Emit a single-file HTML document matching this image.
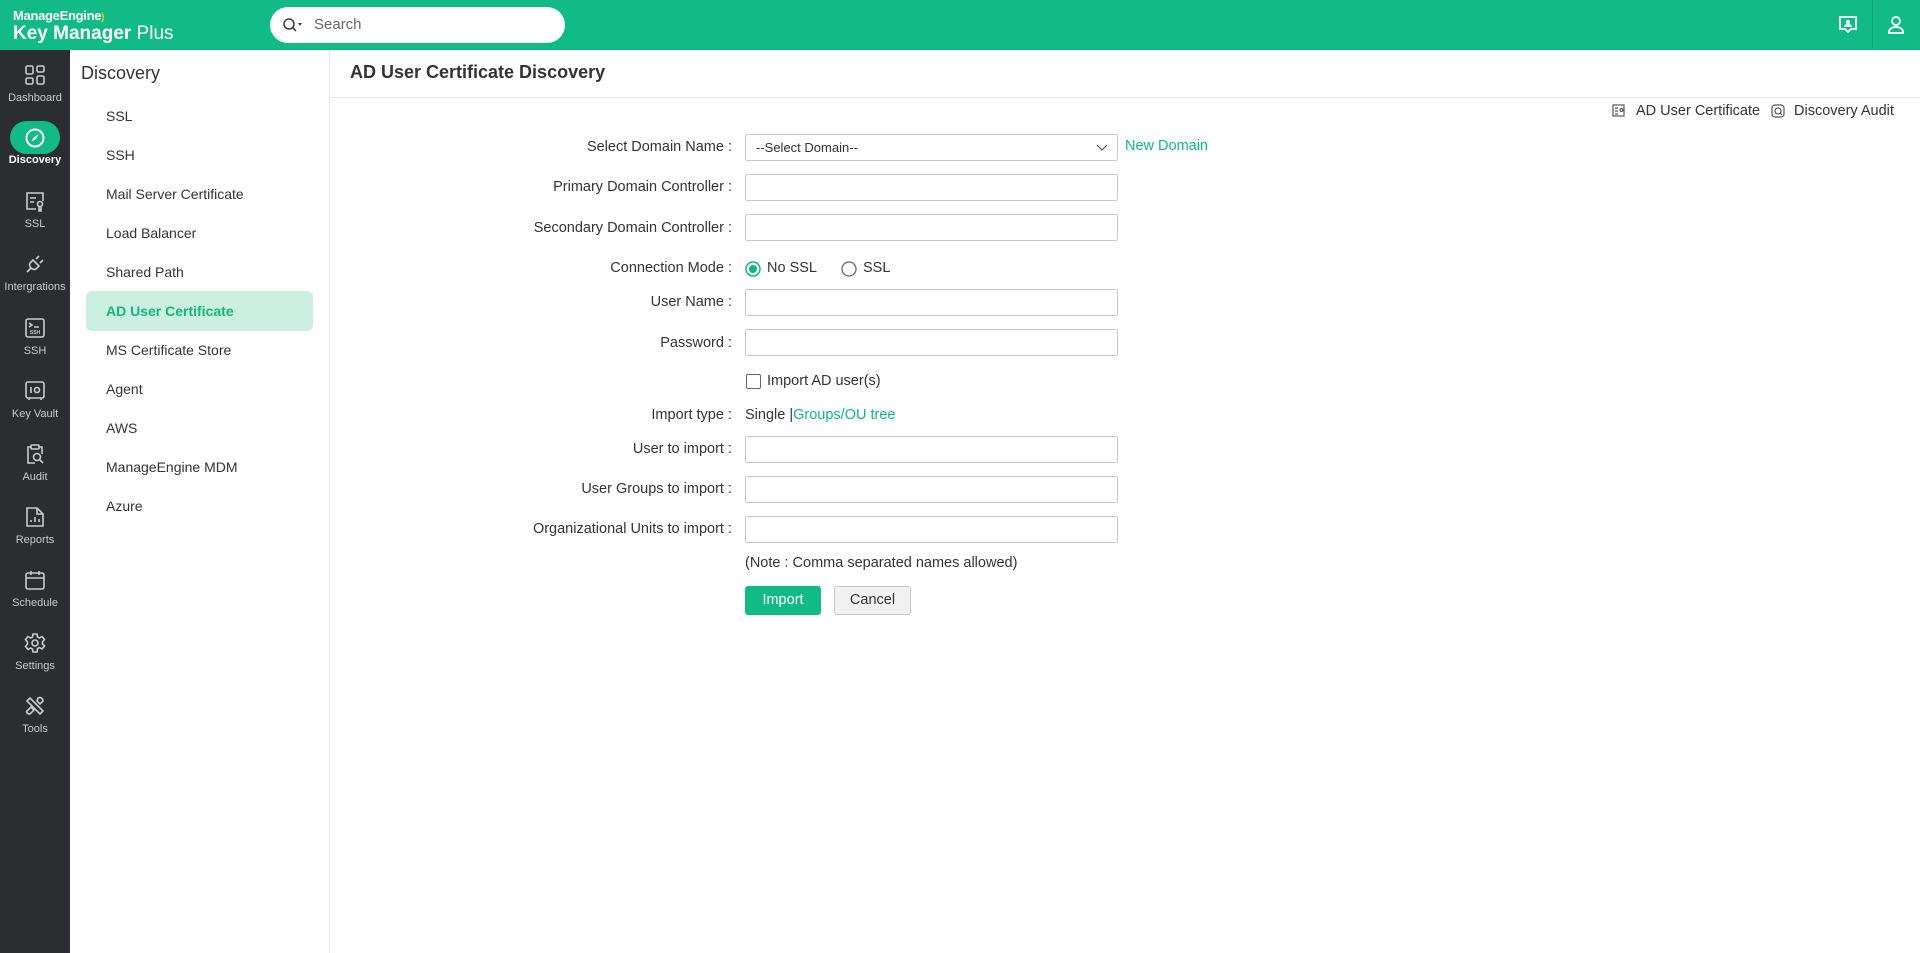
<!DOCTYPE html>
<html><head><meta charset="utf-8"><style>
*{box-sizing:border-box;margin:0;padding:0}
body{width:1920px;height:953px;overflow:hidden;font-family:"Liberation Sans",sans-serif;background:#fff;color:#333;position:relative}
.hdr{position:absolute;left:0;top:0;width:1920px;height:50px;background:#13bb84}
.side{position:absolute;left:0;top:50px;width:70px;height:903px;background:#2a2e31}
.sub{position:absolute;left:70px;top:50px;width:260px;height:903px;background:#fff;border-right:1px solid #e6e6e6}
.abs{position:absolute}
.si{position:absolute;left:0;width:70px;text-align:center;color:#c9cccd;font-size:11px}
.si svg{display:block;margin:0 auto 6px}
.it{position:absolute;left:106px;font-size:14px;color:#333}
.lbl{position:absolute;right:1188px;font-size:14.5px;color:#333;text-align:right;white-space:nowrap}
.inp{position:absolute;left:745px;width:373px;height:27px;border:1px solid #c8c8c8;border-radius:2px;background:#fff}
.row{position:absolute;font-size:14.5px;color:#333;white-space:nowrap}
.g{color:#13b57f}
</style></head><body>
<div class="hdr">
 <div class="abs" style="left:13px;top:8px;color:#fff;font-size:13px;font-weight:bold;letter-spacing:-0.3px">ManageEngine<span style="font-size:10px;color:#f5c518">)</span></div>
 <div class="abs" style="left:13px;top:23px;color:#fff;font-size:19px;"><span style="font-weight:600">Key Manager</span> Plus</div>
 <div class="abs" style="left:270px;top:7px;width:295px;height:36px;background:#fff;border-radius:18px">
  <svg class="abs" style="left:12px;top:10px" width="22" height="16" viewBox="0 0 22 16"><circle cx="7" cy="7" r="5" fill="none" stroke="#444" stroke-width="1.6"/><path d="M10.5 10.5L14 14" stroke="#444" stroke-width="1.6"/><path d="M16 6h4l-2 3z" fill="#444"/></svg>
  <div class="abs" style="left:44px;top:9px;font-size:15px;color:#666">Search</div>
 </div>
 <svg class="abs" style="left:1838px;top:15px" width="20" height="20" viewBox="0 0 20 20"><path d="M2 2h16v12h-5l-3 3-3-3H2z" fill="none" stroke="#fff" stroke-width="1.8"/><circle cx="10" cy="7" r="2" fill="#fff"/><path d="M6 12c0-2 2-3 4-3s4 1 4 3z" fill="#fff"/></svg>
 <div class="abs" style="left:1872px;top:0;width:1px;height:50px;background:#0fa574"></div>
 <svg class="abs" style="left:1886px;top:15px" width="20" height="20" viewBox="0 0 20 20"><circle cx="10" cy="6" r="4" fill="none" stroke="#fff" stroke-width="1.8"/><path d="M3 18v-1c0-3 3-5 7-5s7 2 7 5v1z" fill="none" stroke="#fff" stroke-width="1.8"/></svg>
</div>
<div class="side">
 <div class="si" style="top:14px"><svg width="22" height="22" viewBox="0 0 22 22" fill="none" stroke="#c9cccd" stroke-width="1.6"><rect x="2" y="2" width="7" height="8" rx="1.5"/><rect x="13" y="2" width="7" height="6" rx="1.5"/><rect x="2" y="14" width="7" height="6" rx="1.5"/><rect x="13" y="12" width="7" height="8" rx="1.5"/></svg>Dashboard</div>
 <div class="abs" style="left:10px;top:71px;width:50px;height:33px;border-radius:17px;background:#13bb84"></div>
 <svg class="abs" style="left:24px;top:77px" width="22" height="22" viewBox="0 0 22 22"><circle cx="11" cy="11" r="8.5" fill="none" stroke="#fff" stroke-width="2"/><path d="M14.5 7.5L12 12 7.5 14.5 10 10z" fill="#fff"/></svg>
 <div class="si" style="top:104px;color:#fff;font-weight:bold">Discovery</div>
 <div class="si" style="top:140px"><svg width="22" height="22" viewBox="0 0 22 22" fill="none" stroke="#c9cccd" stroke-width="1.6"><path d="M12 19H3V3h16v8"/><path d="M6 8h6M6 12h4"/><circle cx="16" cy="14" r="2.5"/><path d="M15 17v4l1-1 1 1v-4"/></svg>SSL</div>
 <div class="si" style="top:203px"><svg width="22" height="22" viewBox="0 0 22 22" fill="none" stroke="#c9cccd" stroke-width="1.6"><path d="M9 7l6 6-3 3c-2 1-4 0-5-1s-2-3-1-5z"/><path d="M12 6l3-3M16 10l3-3M7 15l-4 4"/></svg>Intergrations</div>
 <div class="si" style="top:267px"><svg width="22" height="22" viewBox="0 0 22 22" fill="none" stroke="#c9cccd" stroke-width="1.6"><rect x="2" y="2" width="18" height="18" rx="2"/><path d="M5 6l3 2-3 2M10 10h5"/><text x="11" y="17" font-size="5" fill="#c9cccd" stroke="none" text-anchor="middle" font-family="Liberation Sans" font-weight="bold">SSH</text></svg>SSH</div>
 <div class="si" style="top:330px"><svg width="22" height="22" viewBox="0 0 22 22" fill="none" stroke="#c9cccd" stroke-width="1.6"><rect x="2" y="2" width="18" height="16" rx="2"/><path d="M7 7v6"/><circle cx="13" cy="10" r="2.5"/><path d="M5 18v2M17 18v2"/></svg>Key Vault</div>
 <div class="si" style="top:393px"><svg width="22" height="22" viewBox="0 0 22 22" fill="none" stroke="#c9cccd" stroke-width="1.6"><path d="M7 4H4v16h7M15 4h3v7"/><rect x="7" y="2" width="8" height="4" rx="1"/><circle cx="13" cy="14" r="3.5"/><path d="M16 17l3 3"/></svg>Audit</div>
 <div class="si" style="top:456px"><svg width="22" height="22" viewBox="0 0 22 22" fill="none" stroke="#c9cccd" stroke-width="1.6"><path d="M3 2h10l6 6v12H3z"/><path d="M13 2v6h6"/><path d="M7 16v-2M11 16v-5M15 16v-3"/></svg>Reports</div>
 <div class="si" style="top:519px"><svg width="22" height="22" viewBox="0 0 22 22" fill="none" stroke="#c9cccd" stroke-width="1.6"><rect x="2" y="4" width="18" height="16" rx="2"/><path d="M2 9h18M7 2v4M15 2v4"/></svg>Schedule</div>
 <div class="si" style="top:582px"><svg width="22" height="22" viewBox="0 0 22 22" fill="none" stroke="#c9cccd" stroke-width="1.6"><path d="M9 2h4l.5 3 2 1 2.5-1.5 2.5 3L18.5 10v2l2 2-2.5 3-2.5-1.5-2 1L13 20H9l-.5-3-2-1L4 17.5 1.5 14.5 3.5 12v-2L1.5 7.5 4 4.5 6.5 6l2-1z"/><circle cx="11" cy="11" r="3"/></svg>Settings</div>
 <div class="si" style="top:645px"><svg width="22" height="22" viewBox="0 0 22 22" fill="none" stroke="#c9cccd" stroke-width="1.6"><path d="M3 6l3-3 13 13-3 3z"/><path d="M14 3c2-1 5 0 5 3l-3 3-3-3zM3 16l4-4 3 3-4 4c-3 0-4-2-3-3z"/></svg>Tools</div>
</div>
<div class="sub">
 <div class="abs" style="left:11px;top:13px;font-size:18px;color:#333">Discovery</div>
 <div class="abs" style="left:16px;top:241px;width:227px;height:40px;background:#cbf0e2;border-radius:6px"></div>
</div>
<div class="it" style="top:108px">SSL</div>
<div class="it" style="top:147px">SSH</div>
<div class="it" style="top:186px">Mail Server Certificate</div>
<div class="it" style="top:225px">Load Balancer</div>
<div class="it" style="top:264px">Shared Path</div>
<div class="it" style="top:303px;color:#13b57f;font-weight:bold">AD User Certificate</div>
<div class="it" style="top:342px">MS Certificate Store</div>
<div class="it" style="top:381px">Agent</div>
<div class="it" style="top:420px">AWS</div>
<div class="it" style="top:459px">ManageEngine MDM</div>
<div class="it" style="top:498px">Azure</div>

<div class="abs" style="left:350px;top:62px;font-size:18px;font-weight:bold;color:#333">AD User Certificate Discovery</div>
<div class="abs" style="left:331px;top:97px;width:1589px;height:1px;background:#e6e6e6"></div>
<svg class="abs" style="left:1612px;top:104px" width="14" height="14" viewBox="0 0 14 14" fill="none" stroke="#555" stroke-width="1.2"><rect x="1" y="1" width="11" height="11"/><path d="M3 4h3M3 7h3M3 10h3"/><circle cx="9.5" cy="6" r="1.5"/></svg>
<div class="row" style="left:1636px;top:103px">AD User Certificate</div>
<svg class="abs" style="left:1771px;top:104px" width="14" height="14" viewBox="0 0 14 14" fill="none" stroke="#555" stroke-width="1.2"><rect x="1" y="1" width="12" height="12" rx="3"/><circle cx="7" cy="7" r="3"/><path d="M9 9l2 2"/></svg>
<div class="row" style="left:1794px;top:103px">Discovery Audit</div>

<div class="lbl" style="top:139px">Select Domain Name :</div>
<div class="inp" style="top:134px"><span class="abs" style="left:10px;top:5px;font-size:13px;color:#333">--Select Domain--</span><svg class="abs" style="left:350px;top:9px" width="12" height="8" viewBox="0 0 12 8"><path d="M1 1l5 5 5-5" fill="none" stroke="#555" stroke-width="1.2"/></svg></div>
<div class="row g" style="left:1125px;top:138px">New Domain</div>
<div class="lbl" style="top:179px">Primary Domain Controller :</div>
<div class="inp" style="top:174px"></div>
<div class="lbl" style="top:220px">Secondary Domain Controller :</div>
<div class="inp" style="top:214px"></div>
<div class="lbl" style="top:260px">Connection Mode :</div>
<svg class="abs" style="left:745px;top:261px" width="16" height="16" viewBox="0 0 16 16"><circle cx="8" cy="8" r="7" fill="#fff" stroke="#13b57f" stroke-width="1.5"/><circle cx="8" cy="8" r="4" fill="#13b57f"/></svg>
<div class="row" style="left:767px;top:260px">No SSL</div>
<svg class="abs" style="left:841px;top:261px" width="16" height="16" viewBox="0 0 16 16"><circle cx="8" cy="8" r="7" fill="#fff" stroke="#666" stroke-width="1.3"/></svg>
<div class="row" style="left:863px;top:260px">SSL</div>
<div class="lbl" style="top:294px">User Name :</div>
<div class="inp" style="top:289px"></div>
<div class="lbl" style="top:335px">Password :</div>
<div class="inp" style="top:329px"></div>
<div class="abs" style="left:746px;top:374px;width:15px;height:15px;border:1.5px solid #666;border-radius:2px"></div>
<div class="row" style="left:767px;top:373px">Import AD user(s)</div>
<div class="lbl" style="top:407px">Import type :</div>
<div class="row" style="left:745px;top:407px">Single <span style="color:#333">|</span><span class="g">Groups/OU tree</span></div>
<div class="lbl" style="top:441px">User to import :</div>
<div class="inp" style="top:436px"></div>
<div class="lbl" style="top:481px">User Groups to import :</div>
<div class="inp" style="top:476px"></div>
<div class="lbl" style="top:521px">Organizational Units to import :</div>
<div class="inp" style="top:516px"></div>
<div class="row" style="left:745px;top:555px">(Note : Comma separated names allowed)</div>
<div class="abs" style="left:745px;top:586px;width:76px;height:29px;background:#13bb84;border-radius:3px;color:#fff;font-size:14.5px;text-align:center;line-height:29px">Import</div>
<div class="abs" style="left:834px;top:586px;width:77px;height:29px;background:#f1f1f1;border:1px solid #c8c8c8;border-radius:3px;color:#333;font-size:14.5px;text-align:center;line-height:27px">Cancel</div>
</body></html>
